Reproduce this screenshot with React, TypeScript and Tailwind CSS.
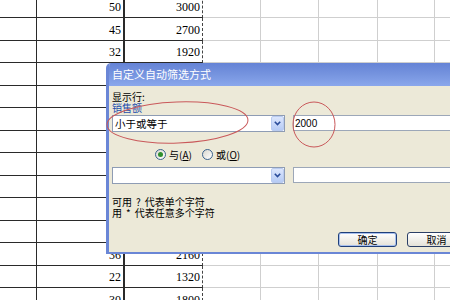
import React from 'react';

// qty / amount pairs; rows 3..10 sit under the dialog and show nothing
const rows = [
  { qty: '50', amt: '3000' },
  { qty: '45', amt: '2700' },
  { qty: '32', amt: '1920' },
  { qty: '', amt: '' },
  { qty: '', amt: '' },
  { qty: '', amt: '' },
  { qty: '', amt: '' },
  { qty: '', amt: '' },
  { qty: '', amt: '' },
  { qty: '', amt: '' },
  { qty: '', amt: '' },
  { qty: '36', amt: '2160' },
  { qty: '22', amt: '1320' },
  { qty: '30', amt: '1800' },
];

const greyCols = ['w-[58px]', 'w-[58px]', 'w-[59px]', 'w-[57px]', 'w-[60px]'];

function Sheet() {
  return (
    <div className="-mt-[4.2px] flex flex-col font-['Liberation_Serif',serif] text-[12px] leading-[14px] text-black">
      {rows.map((r, i) => (
        <div key={i} className="flex h-[22.5px] shrink-0">
          <div className="w-[37px] shrink-0 border-r border-b border-[#2a2a2a]" />
          <div className="w-[88px] shrink-0 border-r-2 border-b border-[#2a2a2a] flex items-end justify-end pr-[2px] pb-[3px]">
            {r.qty}
          </div>
          <div className="w-[78px] shrink-0 border-b border-b-[#2a2a2a] border-r border-r-[#444] [border-right-style:dashed] flex items-end justify-end pr-[2px] pb-[3px]">
            {r.amt}
          </div>
          {greyCols.map((w, j) => (
            <div key={j} className={`${w} shrink-0 border-r border-b border-[#cfcfcf]`} />
          ))}
        </div>
      ))}
    </div>
  );
}

function Chevron() {
  return (
    <svg width="7" height="5" viewBox="0 0 7 5">
      <path d="M0.8 0.8 L3.5 3.6 L6.2 0.8" fill="none" stroke="#2a4c9a" strokeWidth="1.6" />
    </svg>
  );
}

function Combo({ value }: { value?: string }) {
  return (
    <div className="w-[173px] h-[17px] shrink-0 bg-white border border-[#8e9cb4] flex items-center">
      <span className="flex-1 pl-[2px] text-[10.5px] leading-[12px]">{value}</span>
      <div className="w-[13px] h-[15px] rounded-[2px] border border-[#b9cbf0] bg-gradient-to-b from-[#dce6fc] to-[#b6cbf5] flex items-center justify-center">
        <Chevron />
      </div>
    </div>
  );
}

function Field({ value }: { value?: string }) {
  return (
    <div className="flex-1 h-[16px] bg-white border border-[#9ca7b8] flex items-center pl-[1px] font-['Liberation_Sans',sans-serif] text-[10px]">
      {value}
    </div>
  );
}

function Radio({ checked, label, hot }: { checked?: boolean; label: string; hot: string }) {
  return (
    <div className="flex items-center gap-[3px]">
      <span className="w-[11px] h-[11px] rounded-full border border-[#3a628e] bg-gradient-to-br from-[#d8d7ce] to-white flex items-center justify-center">
        {checked && <span className="w-[5px] h-[5px] rounded-full bg-[#2f8f2f]" />}
      </span>
      <span>
        {label}(<span className="underline">{hot}</span>)
      </span>
    </div>
  );
}

function FilterDialog() {
  return (
    <div className="absolute left-[106px] top-[63px] w-[352px] h-[191px] flex flex-col bg-[#ece9d8] border-l-[3px] border-b-2 border-[#6a86d6] rounded-tl-[5px] overflow-hidden font-['Noto_Sans_CJK_SC',sans-serif]">
      <div className="h-[23px] shrink-0 flex items-center pl-[3px] bg-gradient-to-b from-[#6583d6] via-[#7694df] to-[#8aa7ec] text-white text-[11px]">
        自定义自动筛选方式
      </div>
      <div className="flex flex-col pl-[3px] text-[10px] leading-[11px] text-black">
        <div className="mt-[5px] h-[11px]">显示行:</div>
        <div className="h-[11px] text-[#1f4fae]">销售额</div>
        <div className="mt-[2px] flex gap-[8px] items-start">
          <Combo value="小于或等于" />
          <Field value="2000" />
        </div>
        <div className="mt-[15px] h-[14px] pl-[43px] flex items-center">
          <div className="w-[47px]">
            <Radio checked label="与" hot="A" />
          </div>
          <Radio label="或" hot="O" />
        </div>
        <div className="mt-[6px] flex gap-[8px] items-start">
          <Combo />
          <Field />
        </div>
        <div className="mt-[12px] h-[11px]">
          可用<span className="mx-[4px]">?</span>代表单个字符
        </div>
        <div className="h-[11px]">
          用<span className="mx-[4px]">*</span>代表任意多个字符
        </div>
        <div className="mt-[14px] ml-[226px] flex gap-[10px]">
          <div className="w-[59px] h-[15px] shrink-0 rounded-[3px] border border-[#1e3f7a] bg-gradient-to-b from-white to-[#e4e2d8] shadow-[inset_0_0_0_1px_#a8c0ee] flex items-center justify-center">
            确定
          </div>
          <div className="w-[59px] h-[15px] shrink-0 rounded-[3px] border border-[#2b3f66] bg-gradient-to-b from-white to-[#e4e2d8] flex items-center justify-center">
            取消
          </div>
        </div>
      </div>
    </div>
  );
}

export default function App() {
  return (
    <div className="relative w-[450px] h-[300px] overflow-hidden bg-white">
      <Sheet />
      <FilterDialog />
      {/* red hand-drawn circles */}
      <svg className="absolute inset-0 pointer-events-none" width="450" height="300">
        <ellipse cx="177.5" cy="122.5" rx="70.5" ry="20.5" fill="none" stroke="#c9585a" strokeWidth="1" transform="rotate(-2 177.5 122.5)" />
        <ellipse cx="314" cy="124.5" rx="21" ry="22.5" fill="none" stroke="#c9585a" strokeWidth="1" />
      </svg>
    </div>
  );
}
